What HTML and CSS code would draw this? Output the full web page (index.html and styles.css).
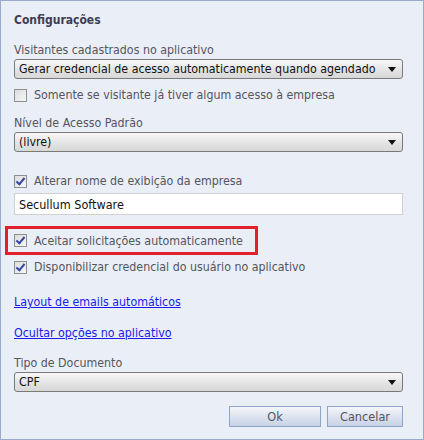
FILE: index.html
```html
<!DOCTYPE html>
<html>
<head>
<meta charset="utf-8">
<link rel="stylesheet" href="styles.css">
</head>
<body>
<div class="panel">
  <div class="title">Configurações</div>

  <div class="label first">Visitantes cadastrados no aplicativo</div>
  <div class="select"><span>Gerar credencial de acesso automaticamente quando agendado</span><i class="arrow"></i></div>
  <div class="check row1"><span class="box"></span><span>Somente se visitante já tiver algum acesso à empresa</span></div>

  <div class="label second">Nível de Acesso Padrão</div>
  <div class="select"><span>(livre)</span><i class="arrow"></i></div>

  <div class="check row2"><span class="box on"></span><span>Alterar nome de exibição da empresa</span></div>
  <div class="input">Secullum Software</div>

  <div class="highlight">
    <div class="check"><span class="box on"></span><span>Aceitar solicitações automaticamente</span></div>
  </div>
  <div class="check row4"><span class="box on"></span><span>Disponibilizar credencial do usuário no aplicativo</span></div>

  <a class="link l1" href="#">Layout de emails automáticos</a>
  <a class="link l2" href="#">Ocultar opções no aplicativo</a>

  <div class="label third">Tipo de Documento</div>
  <div class="select"><span>CPF</span><i class="arrow"></i></div>

  <div class="buttons">
    <button class="btn ok">Ok</button>
    <button class="btn cancel">Cancelar</button>
  </div>
</div>
</body>
</html>
```

FILE: styles.css
```css
html, body {
  margin: 0;
  padding: 0;
  background: #eaeef6;
}
.panel {
  box-sizing: border-box;
  width: 424px;
  height: 440px;
  border: 1px solid #9aabcb;
  background: #eaeef6;
  padding: 12px 20px 0 13px;
  display: flex;
  flex-direction: column;
  font-family: "DejaVu Sans Condensed", "DejaVu Sans", Verdana, sans-serif;
  font-size: 12.3px;
  color: #555560;
}
.title {
  font-weight: bold;
  font-size: 12px;
  color: #3d3d55;
  line-height: 14px;
}
.label {
  line-height: 14px;
  color: #555560;
}
.label.first { margin-top: 16px; }
.label.second { margin-top: 14px; }
.label.third { margin-top: 16px; }
.select {
  margin-top: 2px;
  height: 20px;
  box-sizing: border-box;
  border: 1px solid #7a7a7a;
  border-radius: 3px;
  background: linear-gradient(#f8f8f8, #e2e2e2 60%, #d8d8d8);
  display: flex;
  align-items: center;
  justify-content: space-between;
  padding: 0 6px 0 4px;
  color: #111;
  font-size: 12.3px;
  white-space: nowrap;
}
.arrow {
  width: 0;
  height: 0;
  border-left: 4px solid transparent;
  border-right: 4px solid transparent;
  border-top: 5px solid #111;
}
.check {
  display: flex;
  align-items: center;
  gap: 7px;
  line-height: 14px;
  color: #555560;
}
.box {
  width: 11px;
  height: 11px;
  border: 1px solid #8e8f8f;
  background: linear-gradient(135deg, #dcdcdc, #f6f6f6);
  position: relative;
  flex: none;
}
.box.on::after {
  content: "";
  position: absolute;
  left: 3px;
  top: 0px;
  width: 3px;
  height: 7px;
  border-right: 2px solid #3446a8;
  border-bottom: 2px solid #3446a8;
  transform: rotate(40deg);
}
.row1 { margin-top: 9px; }
.row2 { margin-top: 22px; }
.input {
  margin-top: 5px;
  height: 22px;
  box-sizing: border-box;
  border: 1px solid #d0d0d0;
  background: #fff;
  display: flex;
  align-items: center;
  padding-left: 4px;
  color: #111;
  font-size: 12.5px;
}
.highlight {
  margin-top: 11px;
  margin-left: -9px;
  width: 253px;
  height: 29px;
  box-sizing: border-box;
  border: 3px solid #e0212b;
  display: flex;
  align-items: center;
  padding-left: 6px;
}
.row4 { margin-top: 5px; }
.link {
  color: #1a1aee;
  text-decoration: underline;
  line-height: 14px;
  align-self: flex-start;
}
.l1 { margin-top: 21px; }
.l2 { margin-top: 17px; }
.buttons {
  margin-top: 14px;
  display: flex;
  justify-content: flex-end;
  gap: 6px;
}
.btn {
  height: 21px;
  box-sizing: border-box;
  border: 1px solid #8fa5c8;
  background: linear-gradient(#f4f6fa, #dde4ef 50%, #c6d2e5);
  font-family: "DejaVu Sans Condensed", "DejaVu Sans", Verdana, sans-serif;
  font-size: 12.6px;
  color: #555560;
  padding: 0;
}
.ok { width: 92px; }
.cancel { width: 76px; }
```
